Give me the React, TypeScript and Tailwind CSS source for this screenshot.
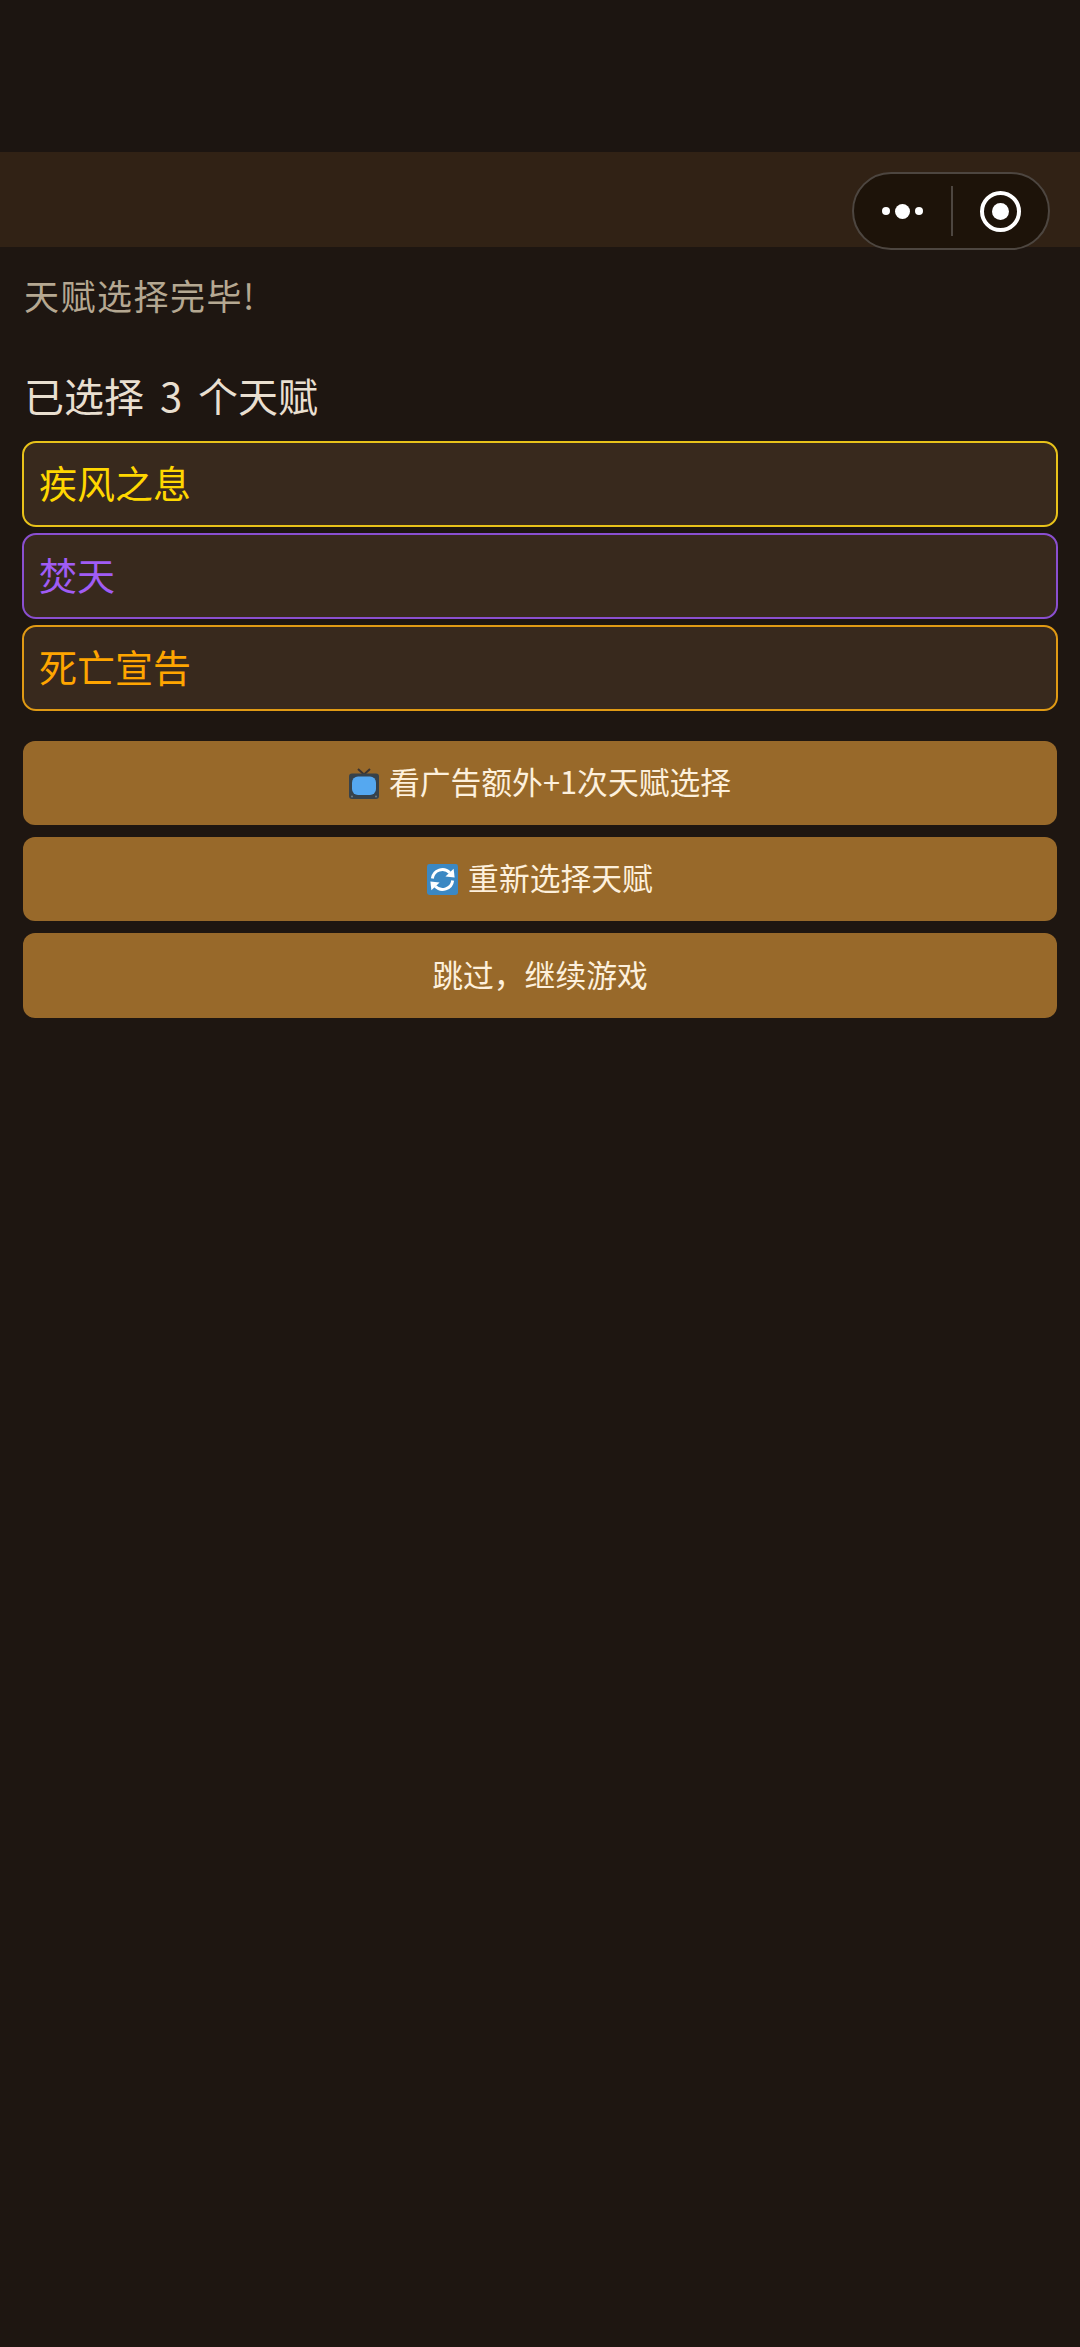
const font = { fontFamily: '"Noto Sans CJK SC", "Noto Sans", sans-serif' };

function TvIcon() {
  return (
    <svg width="30" height="31" viewBox="0 0 30 31" className="shrink-0">
      <path d="M9 1 L15 6.5 L21 1" fill="none" stroke="#3a3330" strokeWidth="2" />
      <rect x="0" y="5.5" width="30" height="25.5" rx="3" fill="#37424a" />
      <rect x="3" y="8.5" width="24" height="18.5" rx="6" fill="#55a8f0" />
      <circle cx="3" cy="28.5" r="1" fill="#6d7c86" />
      <circle cx="27" cy="28.5" r="1" fill="#6d7c86" />
    </svg>
  );
}

function RefreshIcon() {
  return (
    <svg width="31" height="31" viewBox="0 0 32 32" className="shrink-0">
      <rect x="0" y="0" width="32" height="32" rx="2.5" fill="#3b88c3" />
      <path d="M5.5 15 A10.5 10.5 0 0 1 23.5 9" fill="none" stroke="#fff" strokeWidth="3" />
      <path d="M19 13 L28.5 14 L27.5 5 Z" fill="#fff" />
      <path d="M26.5 17 A10.5 10.5 0 0 1 8.5 23" fill="none" stroke="#fff" strokeWidth="3" />
      <path d="M13 19 L3.5 18 L4.5 27 Z" fill="#fff" />
    </svg>
  );
}

function Talent({ name, border, text }: { name: string; border: string; text: string }) {
  return (
    <div className={`flex h-[86px] items-center rounded-[14px] border-[2px] bg-[#38291d] pb-[5px] pl-[15px] text-[38px] ${border} ${text}`}>
      {name}
    </div>
  );
}

function ActionButton({ children, height }: { children: React.ReactNode; height: string }) {
  return (
    <div className={`flex w-full items-center justify-center gap-[10px] rounded-[12px] bg-[#98692a] text-[30.8px] text-[#fdf0dc] ${height}`}>
      {children}
    </div>
  );
}

export default function App() {
  return (
    <div className="h-[2347px] w-[1080px] overflow-hidden bg-[#1e1611]" style={font}>
      <div className="h-[152px] bg-[#1c1511]" />
      <div className="flex h-[95px] items-start justify-end bg-[#312215] pr-[30px] pt-[20px]">
        <div className="flex h-[78px] w-[198px] shrink-0 items-center rounded-full border-[2px] border-[#4d4640] bg-[#1d1309]">
          <div className="flex w-[97px] items-center justify-center gap-[5px]">
            <span className="h-[8px] w-[8px] rounded-full bg-white" />
            <span className="h-[15px] w-[15px] rounded-full bg-white" />
            <span className="h-[8px] w-[8px] rounded-full bg-white" />
          </div>
          <div className="h-[50px] w-[2px] bg-[#4d4640]" />
          <div className="flex flex-1 items-center justify-center">
            <div className="flex h-[41px] w-[41px] items-center justify-center rounded-full border-[4px] border-white">
              <span className="h-[17px] w-[17px] rounded-full bg-white" />
            </div>
          </div>
        </div>
      </div>
      <div className="flex flex-col px-[22px]">
        <div className="mt-[25px] pl-[2px] text-[35px] leading-[46px] tracking-[1.5px] text-[#b5a892]">天赋选择完毕!</div>
        <div className="mt-[47px] whitespace-pre pl-[2px] text-[40px] leading-[60px] text-[#e9dfd0] [word-spacing:7px]">已选择 3 个天赋</div>
        <div className="mt-[16px] flex flex-col gap-[6px]">
          <Talent name="疾风之息" border="border-[#e8c21a]" text="text-[#ffd700]" />
          <Talent name="焚天" border="border-[#8a4fd0]" text="text-[#a05cf5]" />
          <Talent name="死亡宣告" border="border-[#e09a14]" text="text-[#ffa500]" />
        </div>
        <div className="mt-[30px] flex flex-col gap-[12px] px-[1px]">
          <ActionButton height="h-[84px]">
            <TvIcon />
            <span className="pb-[3px]">看广告额外+1次天赋选择</span>
          </ActionButton>
          <ActionButton height="h-[84px]">
            <RefreshIcon />
            <span className="pb-[3px]">重新选择天赋</span>
          </ActionButton>
          <ActionButton height="h-[85px]">
            <span className="pb-[3px]">跳过，继续游戏</span>
          </ActionButton>
        </div>
      </div>
    </div>
  );
}
